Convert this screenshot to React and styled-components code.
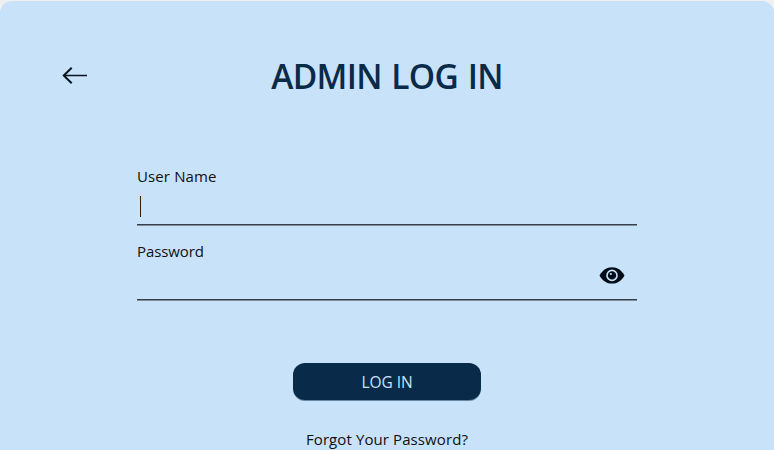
import React from "react";
import styled, { createGlobalStyle } from "styled-components";

const GlobalStyle = createGlobalStyle`
  * { box-sizing: border-box; }
  body {
    margin: 0;
    overflow: hidden;
    background: #f0f0f0;
    font-family: "Open Sans", "Noto Sans", sans-serif;
    color: #101010;
  }
`;

const Panel = styled.main`
  width: 774px;
  height: 449px;
  margin-top: 1px;
  overflow: hidden;
  border-radius: 12px 12px 0 0;
  background: #c8e2f9;
`;

const Header = styled.header`
  display: grid;
  grid-template-columns: 64px 1fr 64px;
  align-items: center;
  height: 50px;
  margin: 50px 55px 0;
`;

const BackButton = styled.button`
  display: flex;
  width: 40px;
  height: 40px;
  padding: 0 0 0 6px;
  align-items: center;
  border: 0;
  background: none;
`;

const Title = styled.h1`
  margin: 0;
  text-align: center;
  white-space: nowrap;
  font-size: 33.5px;
  line-height: 50px;
  font-weight: 600;
  letter-spacing: -0.7px;
  word-spacing: 1.6px;
  color: #092a49;
`;

const Form = styled.form`
  display: flex;
  flex-direction: column;
  width: 500px;
  margin: 63px auto 0;
`;

const Field = styled.div`
  height: 75px;
`;

const Label = styled.label`
  display: block;
  height: 24px;
  font-size: 15px;
  line-height: 24px;
  letter-spacing: ${(p) => p.$spacing};
`;

const Entry = styled.div`
  display: flex;
  align-items: flex-start;
  justify-content: space-between;
  height: 37px;
  padding: ${(p) => p.$top} 12px 0 3px;
  border-bottom: 1px solid #35404c;
  box-shadow: 0 1px 0 #7c8c9b;
`;

const Caret = styled.span`
  width: 1px;
  height: 21px;
  background: #371d06;
`;

const SubmitButton = styled.button`
  align-self: center;
  width: 188px;
  height: 37px;
  margin-top: 49px;
  padding: 1px 0 0;
  border: 0;
  border-radius: 12px;
  background: #092a49;
  box-shadow: 0 1px 0 #6888a3;
  color: #c8e2f9;
  font: 15.5px/36px "Open Sans", sans-serif;
  letter-spacing: -0.05px;
`;

const ForgotLink = styled.span`
  align-self: center;
  margin-top: 27px;
  font-size: 15px;
  line-height: 24px;
  letter-spacing: 0.1px;
`;

function ArrowIcon() {
  return (
    <svg width="27" height="20" viewBox="0 0 27 20" fill="none" stroke="#07131f">
      <path d="M2.5 9.5H26" strokeWidth="1.3" />
      <path d="M10.7 1.8L2.8 9.5L10.7 17.2" strokeWidth="2" />
    </svg>
  );
}

function EyeIcon() {
  return (
    <svg width="26" height="18" viewBox="0 0 26 18">
      <path d="M0.5 9.4C3.5 4 7.8 1.2 13 1.2S22.5 4 25.5 9.4C22.5 14.8 18.2 17.6 13 17.6S3.5 14.8 0.5 9.4Z" fill="#020c16" />
      <circle cx="13" cy="9.4" r="5" fill="none" stroke="#c8e2f9" strokeWidth="1.6" />
      <circle cx="11.8" cy="8" r="1.1" fill="#c8e2f9" />
    </svg>
  );
}

export default function App() {
  return (
    <>
      <GlobalStyle />
      <Panel>
        <Header>
          <BackButton type="button" aria-label="Back"><ArrowIcon /></BackButton>
          <Title>ADMIN LOG IN</Title>
        </Header>
        <Form>
          <Field>
            <Label $spacing="0.12px">User Name</Label>
            <Entry $top="8px"><Caret /></Entry>
          </Field>
          <Field>
            <Label $spacing="-0.1px">Password</Label>
            <Entry $top="3px"><span /><EyeIcon /></Entry>
          </Field>
          <SubmitButton type="button">LOG IN</SubmitButton>
          <ForgotLink>Forgot Your Password?</ForgotLink>
        </Form>
      </Panel>
    </>
  );
}
